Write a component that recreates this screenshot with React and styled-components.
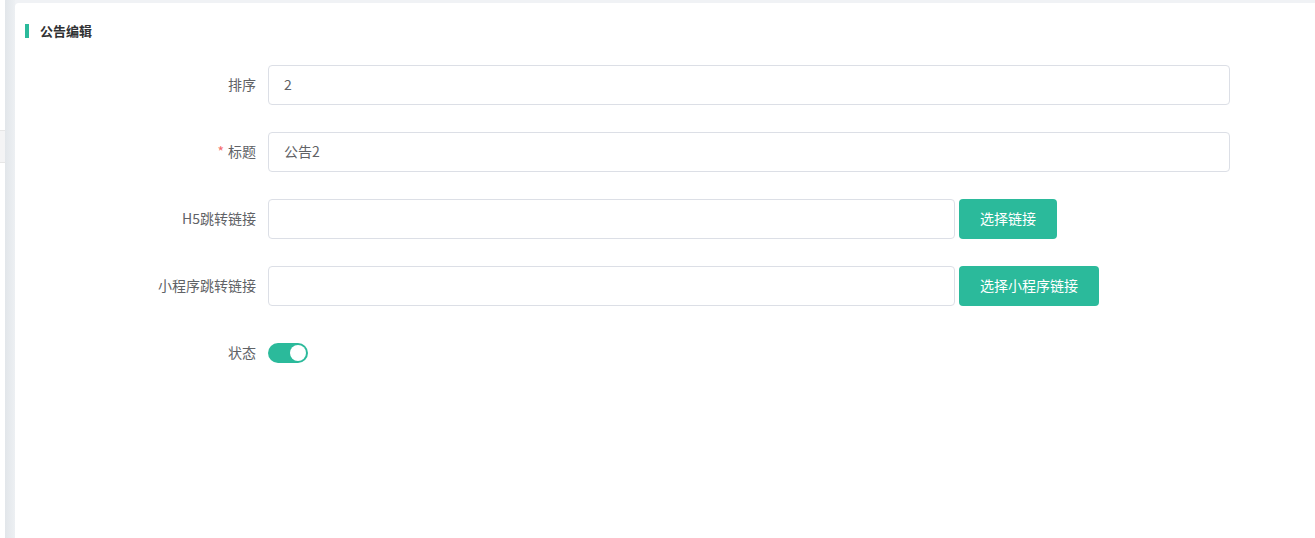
import React, { useState } from "react";
import styled, { createGlobalStyle } from "styled-components";

const GlobalStyle = createGlobalStyle`
	html, body {
		margin: 0;
		padding: 0;
		height: 100%;
	}
	body {
		font-family: "Noto Sans CJK SC", "Liberation Sans", sans-serif;
		color: #606266;
		overflow: hidden;
	}
	#root {
		height: 100%;
	}
`;

const Layout = styled.div`
	display: flex;
	height: 538px;
	width: 1315px;
`;

const Sidebar = styled.div`
	width: 5px;
	background: #fff;
	padding-top: 130px;
	box-sizing: border-box;
`;

const MenuItem = styled.div`
	height: 33px;
	background: #f4f4f5;
	border-top: 1px solid #e6e6e6;
	border-bottom: 1px solid #e6e6e6;
	box-sizing: border-box;
`;

const Main = styled.div`
	flex: 1;
	display: flex;
	padding: 3px 0 0 10px;
	background: linear-gradient(to right, #e2e6ea 0px, #edf0f3 10px, #f0f2f5 10px);
`;

const Card = styled.div`
	flex: 1;
	background: #fff;
	border-top-left-radius: 4px;
	padding: 20px 0 0 10px;
`;

const Title = styled.div`
	display: flex;
	align-items: center;
	gap: 11px;
	height: 16px;
	line-height: 16px;
	font-size: 13px;
	font-weight: 700;
	color: #303133;

	&::before {
		content: "";
		width: 4px;
		height: 14px;
		background: #2bba9b;
	}
`;

const Form = styled.div`
	display: flex;
	flex-direction: column;
	gap: 27px;
	margin-top: 26px;
`;

const FormItem = styled.div`
	display: flex;
	align-items: center;
	min-height: 40px;
`;

const Label = styled.label`
	width: 243px;
	padding-right: 12px;
	padding-bottom: 2px;
	text-align: right;
	font-size: 14px;
	line-height: 20px;
	color: #606266;
	box-sizing: border-box;
	flex-shrink: 0;
`;

const Star = styled.span`
	color: #f56c6c;
	margin-right: 4px;
`;

const Input = styled.input`
	width: ${(p) => p.width}px;
	height: 40px;
	box-sizing: border-box;
	border: 1px solid #dcdfe6;
	border-radius: 4px;
	padding: 0 15px 2px;
	font-size: 14px;
	font-family: inherit;
	color: #606266;
	outline: none;
`;

const Button = styled.button`
	height: 40px;
	margin-left: 4px;
	padding: 0 21px 2px;
	border: none;
	border-radius: 4px;
	background: #2bba9b;
	color: #fff;
	font-size: 14px;
	font-family: inherit;
	cursor: pointer;
`;

const Switch = styled.span`
	position: relative;
	display: inline-block;
	width: 40px;
	height: 20px;
	border-radius: 10px;
	background: ${(p) => (p.on ? "#2bba9b" : "#dcdfe6")};
	cursor: pointer;

	&::after {
		content: "";
		position: absolute;
		top: 2px;
		left: ${(p) => (p.on ? "22px" : "2px")};
		width: 16px;
		height: 16px;
		border-radius: 50%;
		background: #fff;
	}
`;

function App() {
	const [on, setOn] = useState(true);
	return (
		<>
			<GlobalStyle />
			<Layout>
				<Sidebar>
					<MenuItem />
				</Sidebar>
				<Main>
					<Card>
						<Title>公告编辑</Title>
						<Form>
							<FormItem>
								<Label>排序</Label>
								<Input width={962} defaultValue='2' />
							</FormItem>
							<FormItem>
								<Label>
									<Star>*</Star>标题
								</Label>
								<Input width={962} defaultValue='公告2' />
							</FormItem>
							<FormItem>
								<Label>H5跳转链接</Label>
								<Input width={687} />
								<Button>选择链接</Button>
							</FormItem>
							<FormItem>
								<Label>小程序跳转链接</Label>
								<Input width={687} />
								<Button>选择小程序链接</Button>
							</FormItem>
							<FormItem>
								<Label>状态</Label>
								<Switch on={on} onClick={() => setOn(!on)} />
							</FormItem>
						</Form>
					</Card>
				</Main>
			</Layout>
		</>
	);
}

export default App;
